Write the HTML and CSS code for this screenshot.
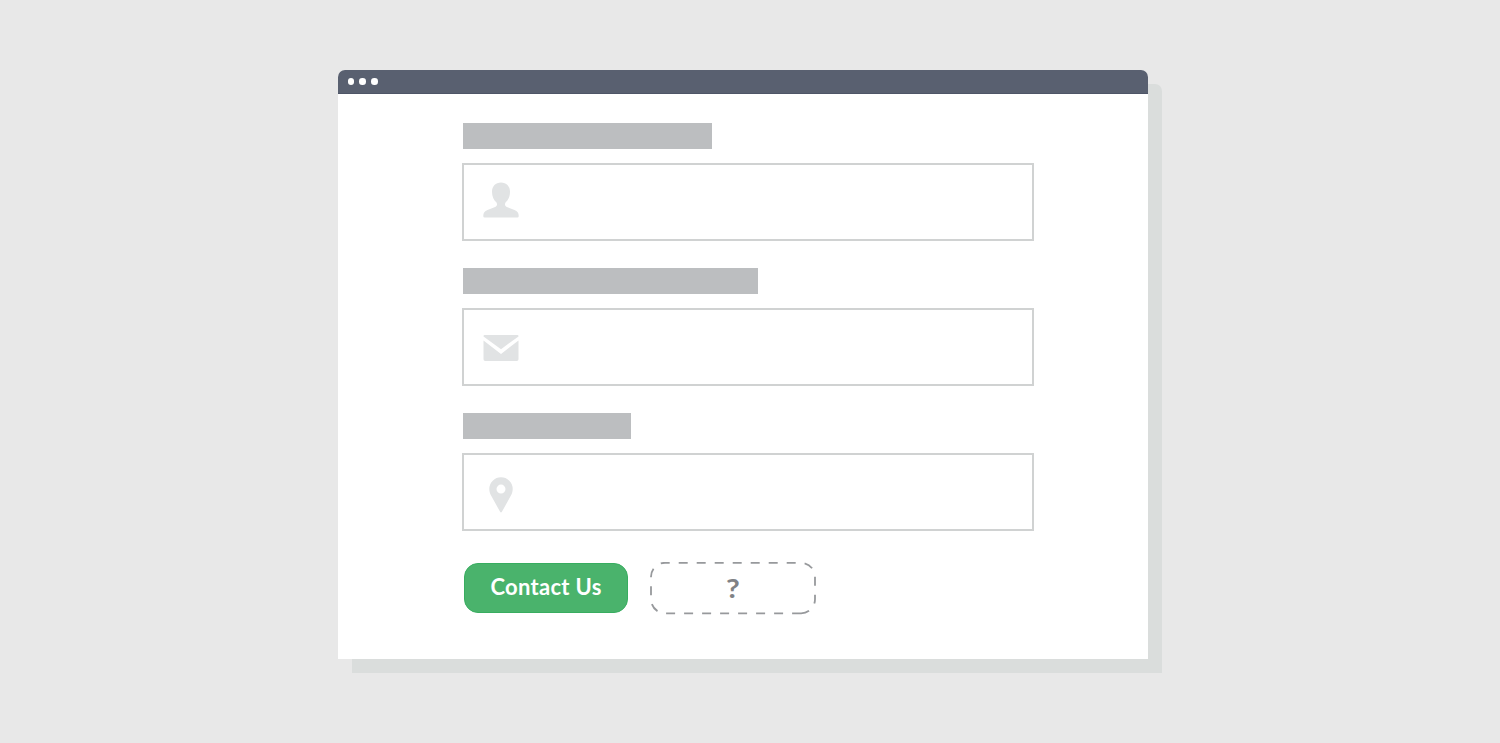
FILE: index.html
```html
<!DOCTYPE html>
<html lang="en">
<head>
<meta charset="utf-8">
<title>Contact form</title>
<link rel="stylesheet" href="styles.css">
</head>
<body>
<main class="window">
  <header class="titlebar">
    <span class="dot"></span><span class="dot"></span><span class="dot"></span>
  </header>
  <form class="form">
    <div class="label label-name"></div>
    <div class="field">
      <svg class="icon" viewBox="0 0 36 36"><path d="M18 0.5C12.6 0.5 9 4.2 9 9.8C9 14.5 10.7 18.3 13.5 20.5C14.6 22.8 14 24.2 11.5 25.2L4.5 27.9C1.5 29.1 0.4 30.8 0.3 33.5V34.2Q0.3 35.5 1.6 35.5H34.4Q35.7 35.5 35.7 34.2V33.5C35.6 30.8 34.5 29.1 31.5 27.9L24.5 25.2C22 24.2 21.4 22.8 22.5 20.5C25.3 18.3 27 14.5 27 9.8C27 4.2 23.4 0.5 18 0.5Z"/></svg>
    </div>
    <div class="label label-mail"></div>
    <div class="field">
      <svg class="icon icon-mail" viewBox="0 0 36 36"><path d="M0.5 6.4V6Q0.5 4.9 1.7 4.9H34.3Q35.5 4.9 35.5 6V6.4L18 19.2Z"/><path d="M0.5 10.6L18 23.9L35.5 10.6V29.3Q35.5 31 33.8 31H2.2Q0.5 31 0.5 29.3Z"/></svg>
    </div>
    <div class="label label-place"></div>
    <div class="field">
      <svg class="icon icon-pin" viewBox="0 0 36 36"><path fill-rule="evenodd" d="M18 0.3A11.7 11.7 0 0 0 6.3 12C6.3 14.4 7 16.6 8.2 18.8L17.1 34.8Q18 36 18.9 34.8L27.8 18.8C29 16.6 29.7 14.4 29.7 12A11.7 11.7 0 0 0 18 0.3ZM18 7.6A4.5 4.5 0 1 1 18 16.6A4.5 4.5 0 1 1 18 7.6Z"/></svg>
    </div>
    <div class="actions">
      <button class="primary" type="button">Contact Us</button>
      <div class="secondary">
        <svg class="outline" viewBox="0 0 168 54"><path d="M152.1 51.3H16A14 14 0 0 1 2 37.3V14.8A14 14 0 0 1 16 0.8H152A14 14 0 0 1 166 14.8V37.3A14 14 0 0 1 152.1 51.3"/></svg>
        <span class="mark">?</span>
      </div>
    </div>
  </form>
</main>
</body>
</html>
```
FILE: styles.css
```css
* { box-sizing: border-box; }
body {
  margin: 0;
  height: 743px;
  padding: 70px 0 0 337.5px;
  background: #e8e8e8;
  font-family: Lato, "Open Sans", sans-serif;
  overflow: hidden;
}
.window {
  width: 810.4px;
  height: 588.5px;
  background: #fff;
  border-radius: 7px 7px 0 0;
  box-shadow: 14px 14px 0 #dadddc;
}
.titlebar {
  height: 24px;
  display: flex;
  align-items: center;
  gap: 5.2px;
  padding-left: 10.2px;
  background: #596070;
  border-bottom: 1px solid #4e5567;
  border-radius: 7px 7px 0 0;
}
.dot { width: 6.5px; height: 6.5px; border-radius: 50%; background: #fff; }
.form { padding: 29px 0 0 124.5px; }
.label { height: 26px; margin-left: 1px; background: #bcbec0; background-clip: content-box; padding-bottom: 0.5px; }
.label-name { width: 249px; }
.label-mail { width: 295px; }
.label-place { width: 168px; }
.field {
  width: 572px;
  height: 78px;
  margin: 14px 0 27px;
  padding: 17px 0 0 19px;
  border: 2px solid #d0d2d2;
}
.icon { display: block; width: 36px; height: 36px; fill: #e1e3e4; }
.icon-mail { margin-top: 3px; }
.icon-pin { margin-top: 5px; }
.actions { display: flex; align-items: flex-start; margin-top: 31px; gap: 22px; }
.primary {
  width: 164px;
  height: 50px;
  margin: 1px 0 0 2px;
  padding: 0 0 3px;
  border: 1px solid #38ad60;
  border-radius: 14px;
  background: #4ab36c;
  color: #fff;
  font: 700 22px Lato, sans-serif;
  letter-spacing: 0.3px;
  white-space: nowrap;
}
.secondary {
  position: relative;
  width: 166px;
  height: 51px;
  display: flex;
  align-items: center;
  justify-content: center;
  color: #808285;
  font-size: 26px;
  font-weight: 700;
}
.mark { transform: scaleX(1.15); }
.outline {
  position: absolute;
  left: -1px;
  top: 0;
  width: 168px;
  height: 54px;
  fill: none;
  stroke: #97999c;
  stroke-width: 1.8;
  stroke-dasharray: 9 9;
}
```
